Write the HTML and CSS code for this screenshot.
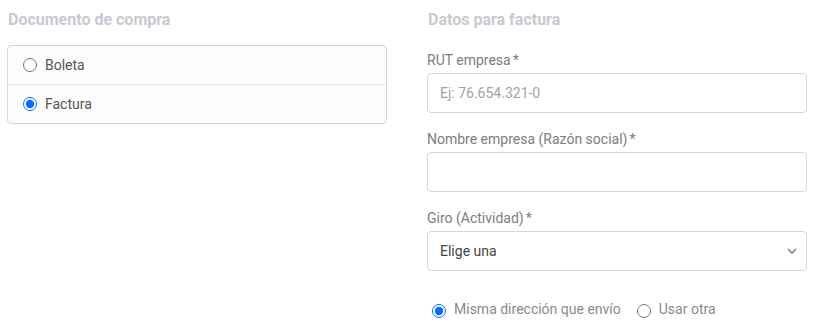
FILE: index.html
```html
<!DOCTYPE html>
<html lang="es">
  <head>
    <meta charset="UTF-8" />
    <meta name="viewport" content="width=device-width, initial-scale=1.0" />
    <title>Checkout - Documento</title>
    <link rel="stylesheet" href="styles.css">
  </head>
  <body>
    <div class="checkout">
      <section class="col">
        <h3 class="section-title">Documento de compra</h3>
        <div class="option-box">
          <label class="option-row">
            <input type="radio" name="doc" value="boleta" />
            <span>Boleta</span>
          </label>
          <label class="option-row">
            <input type="radio" name="doc" value="factura" checked />
            <span>Factura</span>
          </label>
        </div>
      </section>

      <section class="col invoice">
        <h3 class="section-title">Datos para factura</h3>

        <div class="field">
          <label for="rut">RUT empresa<span class="req">*</span></label>
          <input type="text" id="rut" placeholder="Ej: 76.654.321-0" />
        </div>

        <div class="field">
          <label for="razon">Nombre empresa (Razón social)<span class="req">*</span></label>
          <input type="text" id="razon" />
        </div>

        <div class="field">
          <label for="giro">Giro (Actividad)<span class="req">*</span></label>
          <div class="select-wrap">
            <select id="giro">
              <option>Elige una</option>
            </select>
            <svg class="chevron" width="12" height="8" viewBox="0 0 12 8">
              <path d="M2 2l4 4 4-4" fill="none" stroke="#888" stroke-width="1.6" />
            </svg>
          </div>
        </div>

        <div class="address-choice">
          <label class="inline-radio">
            <input type="radio" name="addr" checked />
            <span>Misma dirección que envío</span>
          </label>
          <label class="inline-radio">
            <input type="radio" name="addr" />
            <span>Usar otra</span>
          </label>
        </div>
      </section>
    </div>
  </body>
</html>
```

FILE: styles.css
```css
* {
  box-sizing: border-box;
}

body {
  margin: 0;
  font-family: Roboto, "Noto Sans", sans-serif;
  background-color: #fff;
  color: #555;
}

.checkout {
  display: grid;
  grid-template-columns: 380px 380px;
  column-gap: 40px;
  padding: 10px 0 0 7px;
}

.section-title {
  margin: 0 0 15px 1px;
  font-size: 16px;
  line-height: 20px;
  font-weight: 700;
  color: #cbc8d2;
}

.invoice .section-title {
  margin-bottom: 20px;
}

.option-box {
  border: 1px solid #d6d6d6;
  border-radius: 4px;
  background-color: #fcfcfc;
}

.option-row {
  display: flex;
  align-items: center;
  height: 38px;
  padding-left: 15px;
  font-size: 14px;
  color: #555;
}

.option-row + .option-row {
  border-top: 1px solid #e6e6e6;
  height: 39px;
}

input[type="radio"] {
  width: 14px;
  height: 14px;
  margin: 0 8px 0 0;
  accent-color: #0a6cff;
}

.field {
  margin-bottom: 16px;
}

.field label {
  display: block;
  font-size: 14px;
  line-height: 20px;
  color: #7d7d7d;
  margin-bottom: 3px;
}

.req {
  margin-left: 2px;
}

.field input[type="text"],
.field select {
  width: 100%;
  height: 40px;
  padding: 0 12px;
  border: 1px solid #d6d6d6;
  border-radius: 4px;
  font-family: inherit;
  font-size: 14px;
  color: #444;
  background-color: #fff;
}

.field input::placeholder {
  color: #a3a3a3;
}

.select-wrap {
  position: relative;
}

.field select {
  appearance: none;
}

.chevron {
  position: absolute;
  right: 9px;
  top: 16px;
}

.address-choice {
  display: flex;
  align-items: center;
  gap: 16px;
  margin-top: 29px;
  padding-left: 5px;
  font-size: 14px;
  color: #8a8a8a;
}

.inline-radio {
  display: flex;
  align-items: center;
}

.inline-radio input[type="radio"] {
  margin: 4px 8px 0 0;
}
```
